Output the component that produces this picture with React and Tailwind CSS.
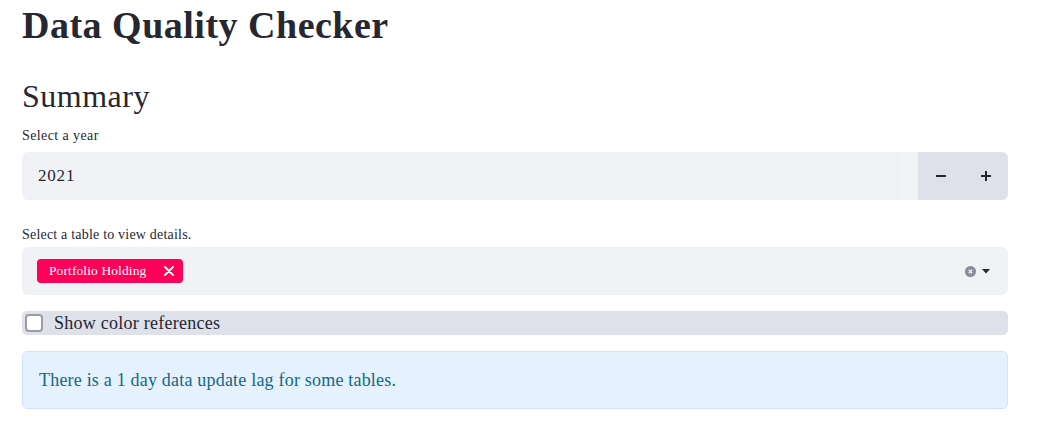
import React from "react";

const serif = { fontFamily: '"Liberation Serif", "DejaVu Serif", serif' };

function App() {
  return (
    <div className="min-h-screen bg-white text-[#262730]" style={serif}>
      <div className="px-[22px] w-[1030px] pt-[2px] flex flex-col">
        <h1 className="text-[38px] font-bold leading-[46px] tracking-[0.5px] text-[#262730]">Data Quality Checker</h1>

        <h2 className="mt-[29px] text-[32px] leading-[38px] tracking-[0.5px] text-[#262730]">Summary</h2>

        <label className="mt-[13px] text-[14px] leading-[16px] tracking-[0.4px]">Select a year</label>
        <div className="mt-[8px] flex h-[48px] rounded-[6px] bg-[#f0f2f6] overflow-hidden">
          <div className="flex-1 flex items-center pl-[16px] text-[17px] tracking-[0.8px]">2021</div>
          <div className="w-[16px] bg-[#f3f4f6]"></div>
          <button className="w-[45px] flex items-center justify-center bg-[#dfe1ea]">
            <span className="block w-[10px] h-[2px] bg-[#262730]"></span>
          </button>
          <button className="w-[45px] flex items-center justify-center bg-[#dfe1ea]">
            <span className="relative block w-[10px] h-[10px]">
              <span className="absolute left-0 top-[4px] w-[10px] h-[2px] bg-[#262730]"></span>
              <span className="absolute top-0 left-[4px] w-[2px] h-[10px] bg-[#262730]"></span>
            </span>
          </button>
        </div>

        <label className="mt-[27px] text-[14px] leading-[16px] tracking-[0.2px]">Select a table to view details.</label>
        <div className="mt-[4px] flex items-center h-[48px] rounded-[6px] bg-[#f0f2f6] pl-[15px] pr-[18px]">
          <div className="flex items-center h-[24px] rounded-[4px] bg-[#ff0059] text-white pl-[12px] pr-[9px]">
            <span className="text-[13.5px] tracking-[0.1px]">Portfolio Holding</span>
            <svg className="ml-[18px]" width="10" height="10" viewBox="0 0 10 10">
              <path d="M1 1 L9 9 M9 1 L1 9" stroke="white" strokeWidth="1.8" strokeLinecap="round" />
            </svg>
          </div>
          <div className="flex-1"></div>
          <svg width="11" height="11" viewBox="0 0 11 11">
            <circle cx="5.5" cy="5.5" r="5.5" fill="#8a8b98" />
            <path d="M3.8 3.8 L7.2 7.2 M7.2 3.8 L3.8 7.2" stroke="#f0f2f6" strokeWidth="1.3" />
          </svg>
          <svg className="ml-[6px]" width="8" height="5" viewBox="0 0 8 5">
            <path d="M0 0 H8 L4 4.5 Z" fill="#262730" />
          </svg>
        </div>

        <div className="mt-[16px] flex items-center h-[24px] rounded-[5px] bg-[#dee0ea] pl-[3px]">
          <span className="block w-[18px] h-[18px] rounded-[4px] border-2 border-[#9c9da3] bg-white"></span>
          <span className="ml-[11px] text-[18px] tracking-[0.25px]">Show color references</span>
        </div>

        <div className="mt-[16px] h-[58px] flex items-center rounded-[5px] bg-[#e5f1fc] border border-[#d2e5f8] px-[16px]">
          <span className="text-[18px] tracking-[0.2px] text-[#0e6a87]">There is a 1 day data update lag for some tables.</span>
        </div>
      </div>
    </div>
  );
}

export default App;
